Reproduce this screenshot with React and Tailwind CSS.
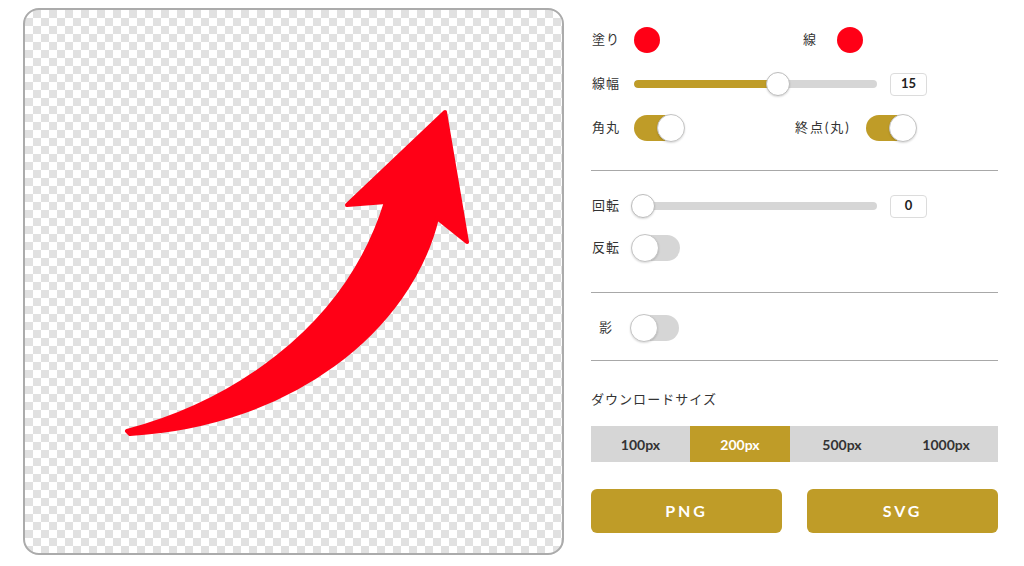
import React from "react";

const GOLD = "bg-[#bf9c28]";

const Label = ({ children, className = "" }) => (
  <span className={"text-[13px] text-[#333] tracking-[0.08em] " + className}>{children}</span>
);

const Toggle = ({ on }) => (
  <div
    className={
      "relative h-[26px] rounded-full " + (on ? "w-[50px] bg-[#bf9c28]" : "w-[48px] bg-[#d6d6d6]")
    }
  >
    <div
      className={
        "absolute top-[-1px] w-[28px] h-[28px] rounded-full bg-white border border-[#c4c4c4] shadow-[0_1px_2px_rgba(0,0,0,0.15)] " +
        (on ? "right-[-1px]" : "left-[-1px]")
      }
    />
  </div>
);

const Slider = ({ fill, thumb }) => (
  <div className="relative w-[243px] h-[24px] flex items-center">
    <div className="w-full h-[8px] rounded-full bg-[#d6d6d6] overflow-hidden">
      <div className="h-full bg-[#bf9c28] rounded-full" style={{ width: fill }} />
    </div>
    <div
      className="absolute top-0 w-[24px] h-[24px] rounded-full bg-white border border-[#bdbdbd] shadow-[0_1px_2px_rgba(0,0,0,0.15)]"
      style={{ left: thumb }}
    />
  </div>
);

const ValueBox = ({ value }) => (
  <div className="ml-[13px] w-[37px] h-[23px] rounded-[4px] border border-[#dcdcdc] flex items-center justify-center text-[13px] font-bold text-[#222]">
    {value}
  </div>
);

const Divider = ({ className = "" }) => <div className={"h-px bg-[#a8a8a8] " + className} />;

export default function App() {
  return (
    <div
      className="flex w-[1024px] h-[566px] bg-white pl-[23px] pt-[8px] overflow-hidden"
      style={{ fontFamily: "Lato, 'Noto Sans CJK JP', sans-serif" }}
    >
      {/* canvas */}
      <div className="w-[541px] h-[547px] rounded-[16px] border-2 border-[#ababab] overflow-hidden bg-white bg-[repeating-conic-gradient(#e1e1e1_0_25%,#ffffff_0_50%)] bg-[length:16px_16px]">
        <svg className="w-full h-full block" viewBox="25 10 537 543">
          <path
            d="M127 431 C225 405 345 335 386 202 L347 205 L445 112 L467 242 L437 218 C410 330 290 425 130 434 Z"
            fill="#ff0016"
            stroke="#ff0016"
            strokeWidth="4"
            strokeLinejoin="round"
          />
        </svg>
      </div>

      {/* controls */}
      <div className="ml-[27px] w-[407px] pt-[10px]">
        <div className="flex h-[44px] items-center">
          <div className="w-[204px] flex items-center">
            <Label className="w-[30px] text-center">塗り</Label>
            <div className="ml-[13px] w-[26px] h-[26px] rounded-full bg-[#ff0016]" />
          </div>
          <div className="flex items-center">
            <Label className="w-[30px] text-center">線</Label>
            <div className="ml-[12px] w-[26px] h-[26px] rounded-full bg-[#ff0016]" />
          </div>
        </div>

        <div className="flex h-[44px] items-center">
          <Label className="w-[30px] text-center">線幅</Label>
          <div className="ml-[13px]">
            <Slider fill="146px" thumb="132px" />
          </div>
          <ValueBox value="15" />
        </div>

        <div className="flex h-[44px] items-center">
          <div className="w-[204px] flex items-center">
            <Label className="w-[30px] text-center">角丸</Label>
            <div className="ml-[13px]">
              <Toggle on />
            </div>
          </div>
          <div className="flex items-center">
            <Label className="tracking-[0.15em]">終点(丸)</Label>
            <div className="ml-[15px]">
              <Toggle on />
            </div>
          </div>
        </div>

        <Divider className="mt-[20px]" />

        <div className="flex h-[42px] items-center mt-[14px]">
          <Label className="w-[30px] text-center">回転</Label>
          <div className="ml-[13px]">
            <Slider fill="0px" thumb="-3px" />
          </div>
          <ValueBox value="0" />
        </div>

        <div className="flex h-[42px] items-center">
          <Label className="w-[30px] text-center">反転</Label>
          <div className="ml-[11px]">
            <Toggle />
          </div>
        </div>

        <Divider className="mt-[23px]" />

        <div className="flex h-[44px] items-center mt-[13px]">
          <Label className="w-[30px] text-center">影</Label>
          <div className="ml-[10px]">
            <Toggle />
          </div>
        </div>

        <Divider className="mt-[10px]" />

        <div className="mt-[29px] h-[20px] flex items-center">
          <Label>ダウンロードサイズ</Label>
        </div>

        <div className="mt-[16px] grid grid-cols-[99px_100px_104px_1fr] h-[36px] text-[14px] font-bold">
          <div className="bg-[#d6d6d6] text-[#333] flex items-center justify-center">100px</div>
          <div className={GOLD + " text-white flex items-center justify-center"}>200px</div>
          <div className="bg-[#d6d6d6] text-[#333] flex items-center justify-center">500px</div>
          <div className="bg-[#d6d6d6] text-[#333] flex items-center justify-center">1000px</div>
        </div>

        <div className="mt-[27px] flex justify-between">
          <button className="w-[191px] h-[44px] rounded-[6px] bg-[#bf9c28] text-white text-[16px] font-bold tracking-[0.18em]">
            PNG
          </button>
          <button className="w-[191px] h-[44px] rounded-[6px] bg-[#bf9c28] text-white text-[16px] font-bold tracking-[0.18em]">
            SVG
          </button>
        </div>
      </div>
    </div>
  );
}
